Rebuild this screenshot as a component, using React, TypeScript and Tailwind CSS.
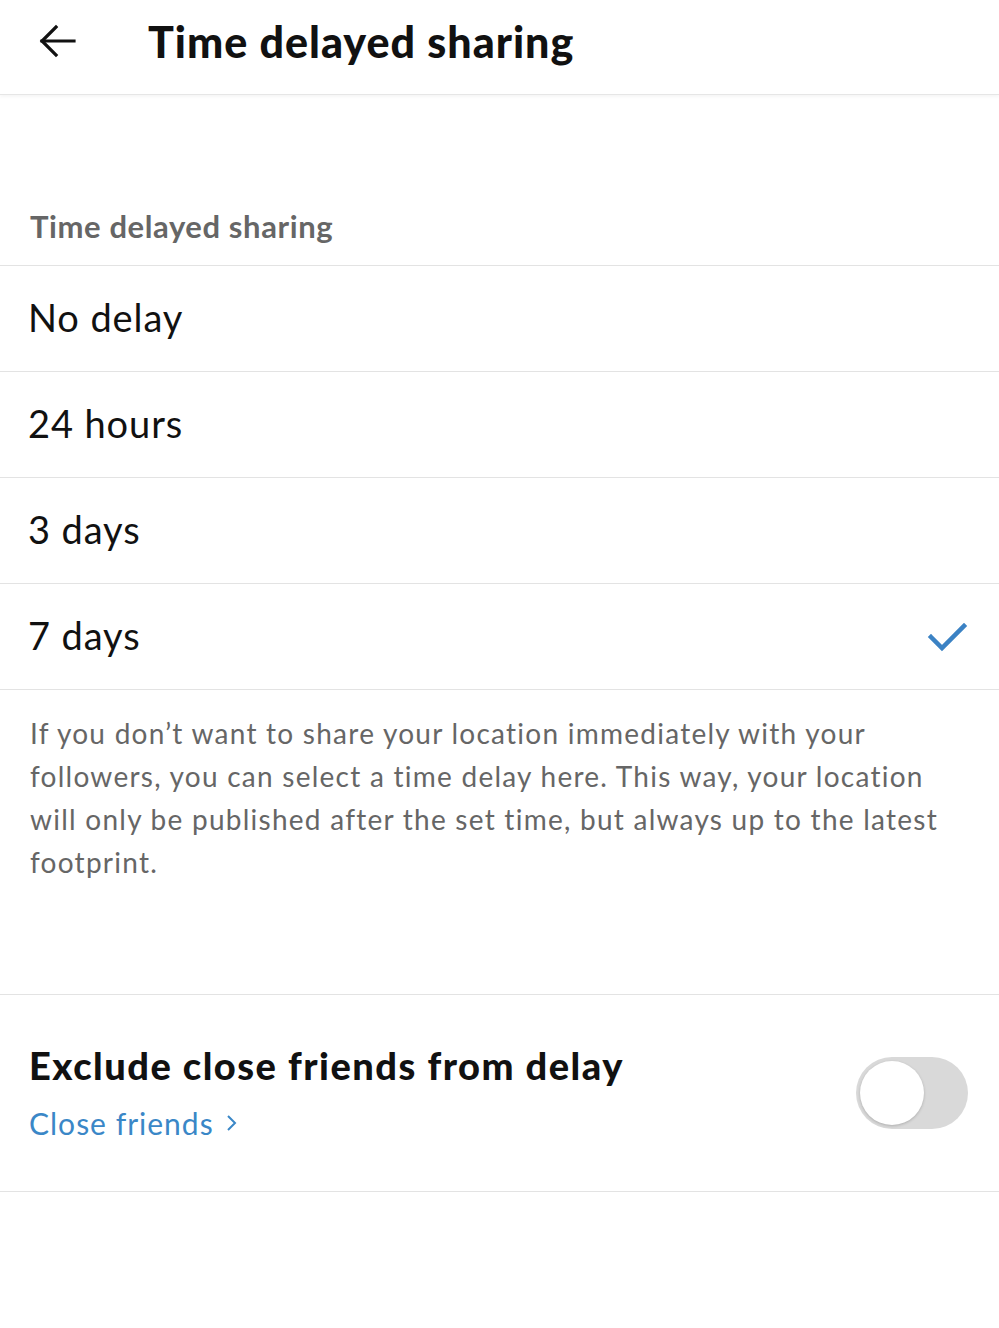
import { useState } from "react";

const options = ["No delay", "24 hours", "3 days", "7 days"];

export default function App() {
  const [selected, setSelected] = useState("7 days");
  const [excluded, setExcluded] = useState(false);

  return (
    <div className="min-h-screen bg-white text-[#111]" style={{ fontFamily: "Lato, 'Open Sans', sans-serif" }}>
      {/* Header */}
      <div className="h-[95px] flex items-center pb-[12px] border-b border-[#e6e6e6] shadow-[0_2px_3px_rgba(0,0,0,0.04)]">
        <button className="ml-[38px] w-[40px] h-[40px] flex items-center justify-center">
          <svg width="38" height="34" viewBox="0 0 38 34" fill="none" stroke="#111" strokeWidth="3.2" strokeLinecap="square">
            <path d="M3 17 H35" />
            <path d="M17 3 L3 17 L17 31" />
          </svg>
        </button>
        <h1 className="ml-[70px] text-[43px] font-black tracking-[1px] leading-none">Time delayed sharing</h1>
      </div>

      {/* Section header */}
      <div className="h-[171px] flex items-end px-[30px] pb-[16px] border-b border-[#e3e3e3]">
        <h2 className="text-[31px] font-bold text-[#666] tracking-[0.6px]">Time delayed sharing</h2>
      </div>

      {/* Options */}
      {options.map((o) => (
        <button
          key={o}
          onClick={() => setSelected(o)}
          className="w-full h-[106px] flex items-center justify-between pl-[28px] pr-[30px] border-b border-[#e3e3e3] text-left"
        >
          <span className="text-[38px] text-[#111] tracking-[0.9px] pb-[2px]">{o}</span>
          {selected === o && (
            <svg width="42" height="34" viewBox="0 0 42 34" fill="none" stroke="#3b82c4" strokeWidth="4.5" strokeLinecap="square">
              <path d="M4 17 L15 28 L37 6" />
            </svg>
          )}
        </button>
      ))}

      {/* Description */}
      <div className="h-[305px] px-[30px] pt-[22px] border-b border-[#e3e3e3]">
        <p className="text-[28px] leading-[43px] text-[#666] tracking-[1.25px]">
          If you don’t want to share your location immediately with your followers, you can select a time delay here. This way, your location will only be published after the set time, but always up to the latest footprint.
        </p>
      </div>

      {/* Exclude close friends */}
      <div className="h-[197px] flex items-center justify-between pl-[29px] pr-[31px] border-b border-[#e3e3e3]">
        <div className="flex flex-col pb-[4px]">
          <span className="text-[38px] font-black leading-[44px] tracking-[1.5px]">Exclude close friends from delay</span>
          <a className="mt-[19px] text-[30px] text-[#3a87c7] tracking-[1px] flex items-center gap-[12px] leading-[34px]">
            Close friends
            <svg width="12" height="20" viewBox="0 0 12 20" fill="none" stroke="#3a87c7" strokeWidth="2">
              <path d="M2 3 L9 10 L2 17" />
            </svg>
          </a>
        </div>
        <button
          onClick={() => setExcluded(!excluded)}
          className={`w-[112px] h-[72px] rounded-full p-[4px] flex items-center ${excluded ? "bg-[#3a87c7] justify-end" : "bg-[#d9d9d9] justify-start"}`}
        >
          <span className="w-[64px] h-[64px] rounded-full bg-white shadow-[0_1px_3px_rgba(0,0,0,0.2)]" />
        </button>
      </div>
    </div>
  );
}
